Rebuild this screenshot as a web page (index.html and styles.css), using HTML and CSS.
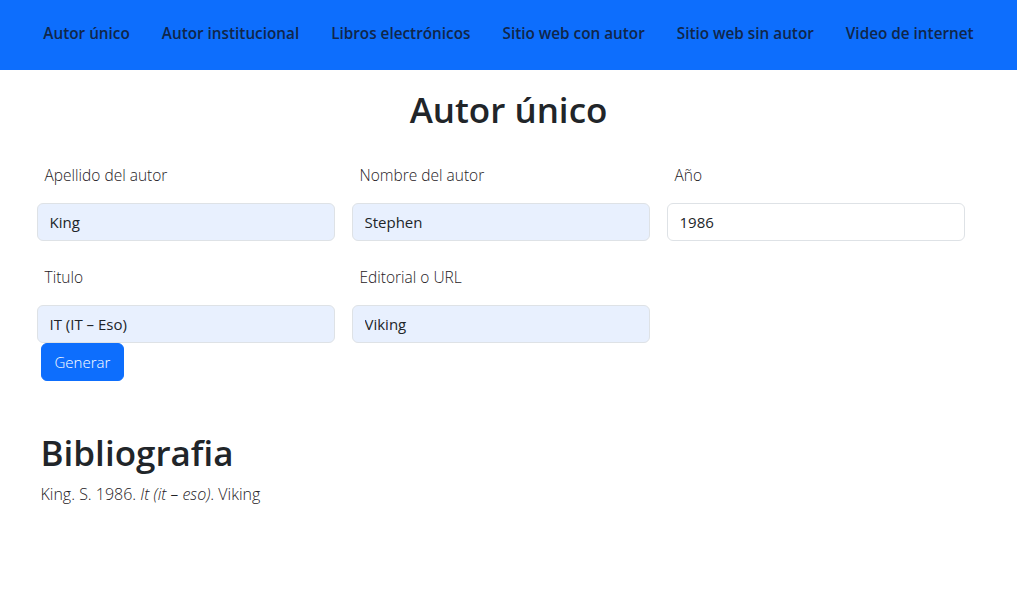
FILE: index.html
```html
<!DOCTYPE html>
<html lang="es">
<head>
<meta charset="utf-8">
<title>Autor único</title>
<link rel="stylesheet" href="styles.css">
</head>
<body>
<nav class="navbar">
  <ul class="nav-list">
    <li><a class="nav-link" href="#">Autor único</a></li>
    <li><a class="nav-link" href="#">Autor institucional</a></li>
    <li><a class="nav-link" href="#">Libros electrónicos</a></li>
    <li><a class="nav-link" href="#">Sitio web con autor</a></li>
    <li><a class="nav-link" href="#">Sitio web sin autor</a></li>
    <li><a class="nav-link" href="#">Video de internet</a></li>
  </ul>
</nav>
<main class="container">
  <h1 class="page-title">Autor único</h1>
  <form class="form-grid">
    <div class="field">
      <label class="field-label">Apellido del autor</label>
      <input class="field-input filled" type="text" value="King">
    </div>
    <div class="field">
      <label class="field-label">Nombre del autor</label>
      <input class="field-input filled" type="text" value="Stephen">
    </div>
    <div class="field">
      <label class="field-label">Año</label>
      <input class="field-input" type="text" value="1986">
    </div>
    <div class="field">
      <label class="field-label">Titulo</label>
      <input class="field-input filled" type="text" value="IT (IT – Eso)">
    </div>
    <div class="field">
      <label class="field-label">Editorial o URL</label>
      <input class="field-input filled" type="text" value="Viking">
    </div>
  </form>
  <button class="btn-primary" type="button">Generar</button>
  <h1 class="section-title">Bibliografia</h1>
  <p class="citation">King. S. 1986. <em>It (it – eso)</em>. Viking</p>
</main>
</body>
</html>
```
FILE: styles.css
```css
* { box-sizing: border-box; }
html, body { margin: 0; padding: 0; }
body {
  font-family: "Open Sans", "Noto Sans", sans-serif;
  font-size: 16px;
  line-height: 1.5;
  color: #212529;
  background: #fff;
}
.navbar {
  background: #0d6efd;
  height: 70px;
  display: flex;
  align-items: center;
  justify-content: center;
}
.nav-list {
  list-style: none;
  margin: 0;
  padding: 0;
  display: flex;
}
.nav-link {
  display: block;
  padding: 6px 16px 10px;
  color: #10264a;
  font-weight: 600;
  text-decoration: none;
  font-size: 15.3px;
}
.container {
  width: 960px;
  margin: 0 auto;
  padding: 0 12px;
}
.page-title {
  margin: 16px 0 29px;
  text-align: center;
  font-size: 35px;
  font-weight: 600;
  line-height: 48px;
}
.form-grid {
  display: grid;
  grid-template-columns: repeat(3, 298px);
  column-gap: 17px;
  row-gap: 24px;
  margin: 0 -4px;
}
.field {
  display: flex;
  flex-direction: column;
}
.field-label {
  padding: 0 8px;
  line-height: 24px;
  margin-bottom: 16px;
  font-size: 15.5px;
  font-weight: 300;
  color: #1e2125;
}
.field-input {
  height: 38px;
  border: 1px solid #dee2e6;
  border-radius: 6px;
  padding: 6px 12px;
  font-family: inherit;
  font-size: 15px;
  color: #212529;
  background: #fff;
}
.field-input.filled {
  background: #e8f0fe;
}
.btn-primary {
  display: block;
  margin: 0;
  height: 38px;
  padding: 0 13px;
  border: 1px solid #0d6efd;
  border-radius: 6px;
  background: #0d6efd;
  color: #fff;
  font-family: inherit;
  font-size: 15px;
  font-weight: 300;
}
.section-title {
  margin: 48px 0 5px;
  font-size: 35px;
  font-weight: 600;
  line-height: 48px;
}
.citation {
  margin: 0;
  font-size: 16px;
  font-weight: 300;
  line-height: 24px;
  color: #1e2125;
}
```
